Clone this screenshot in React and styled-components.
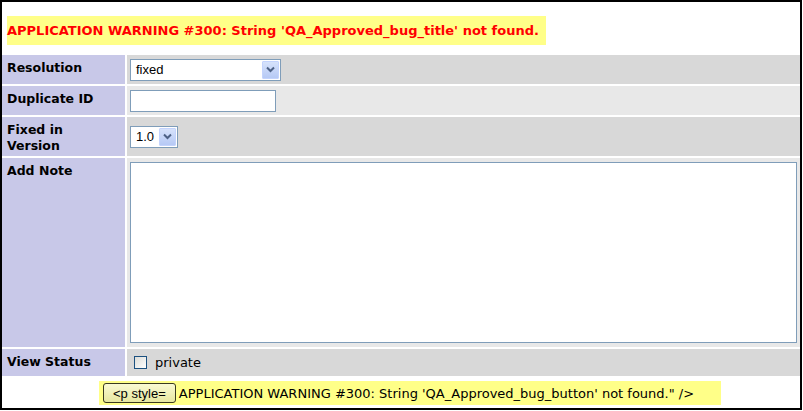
import React from "react";
import styled, { createGlobalStyle } from "styled-components";

const GlobalStyle = createGlobalStyle`
  html, body { margin: 0; padding: 0; background: #fff; }
  body { font-family: "DejaVu Sans", Verdana, sans-serif; }
`;

const Frame = styled.div`
  box-sizing: border-box;
  width: 802px;
  height: 410px;
  border: 2px solid #000;
  background: #fff;
  display: flex;
  flex-direction: column;
`;

const Header = styled.div`
  height: 53px;
  box-sizing: border-box;
  padding: 14px 0 0 5px;
`;

const Warning = styled.span`
  display: inline-block;
  background: #ffff88;
  color: #f00;
  font-weight: bold;
  font-size: 13px;
  line-height: 17px;
  padding: 6px 7px 6px 0;
`;

const Form = styled.div`
  display: grid;
  grid-template-columns: 123px 1fr;
  grid-template-rows: 29px 29px 39px 189px 27px;
  column-gap: 2px;
  row-gap: 2px;
  padding-bottom: 2px;
`;

const Label = styled.div`
  background: #c8c8e8;
  color: #000;
  font-weight: bold;
  font-size: 12.5px;
  line-height: 16px;
  padding: 5px 12px 0 5px;
`;

const Value = styled.div`
  background: ${(p) => (p.$alt ? "#e8e8e8" : "#d8d8d8")};
  display: flex;
  align-items: center;
  padding: 0 3px;
`;

const SelectBox = styled.div`
  box-sizing: border-box;
  width: ${(p) => p.$width}px;
  height: 22px;
  border: 1px solid #7f9db9;
  background: #fff;
  display: flex;
  align-items: center;
  justify-content: space-between;
  padding: 1px;
`;

const SelectText = styled.span`
  font-family: "Liberation Sans", Arial, sans-serif;
  font-size: 13px;
  color: #000;
  padding-left: 4px;
`;

const ArrowButton = styled.span`
  box-sizing: border-box;
  width: 17px;
  height: 18px;
  background: linear-gradient(#d6e2fb, #b6c9f5);
  border: 1px solid #c3d3fd;
  border-radius: 1px;
  display: flex;
  align-items: center;
  justify-content: center;
`;

const TextInput = styled.div`
  box-sizing: border-box;
  width: 146px;
  height: 22px;
  border: 1px solid #7f9db9;
  background: #fff;
`;

const NoteArea = styled.div`
  box-sizing: border-box;
  width: 667px;
  height: 181px;
  border: 1px solid #7f9db9;
  background: #fff;
`;

const CheckRow = styled.label`
  display: flex;
  align-items: center;
  gap: 8px;
  padding-left: 4px;
  font-size: 13px;
  color: #000;
`;

const CheckBox = styled.span`
  box-sizing: border-box;
  width: 13px;
  height: 13px;
  border: 1px solid #1c5180;
  background: linear-gradient(135deg, #dcdcd7, #fff);
`;

const Footer = styled.div`
  flex: 1;
  display: flex;
  justify-content: center;
  align-items: flex-start;
  padding: 3px 0 0 18px;
`;

const FooterNote = styled.div`
  display: flex;
  align-items: center;
  gap: 3px;
  background: #ffff88;
  padding: 2px 27px 2px 4px;
  font-size: 13px;
  color: #000;
`;

const SubmitButton = styled.span`
  box-sizing: border-box;
  height: 20px;
  width: 73px;
  display: flex;
  align-items: center;
  justify-content: center;
  border: 1px solid #3a3a20;
  border-radius: 3px;
  background: linear-gradient(#fafad2, #e6e6a0);
  font-family: "Liberation Sans", Arial, sans-serif;
  font-size: 13px;
  color: #000;
`;

const Chevron = () => (
  <svg width="9" height="7" viewBox="0 0 9 7">
    <path d="M1 1.5 L4.5 5 L8 1.5" fill="none" stroke="#4d6185" strokeWidth="2" />
  </svg>
);

const Select = ({ width, value }) => (
  <SelectBox $width={width}>
    <SelectText>{value}</SelectText>
    <ArrowButton>
      <Chevron />
    </ArrowButton>
  </SelectBox>
);

export default function App() {
  return (
    <>
      <GlobalStyle />
      <Frame>
        <Header>
          <Warning>APPLICATION WARNING #300: String 'QA_Approved_bug_title' not found.</Warning>
        </Header>
        <Form>
          <Label>Resolution</Label>
          <Value>
            <Select width={151} value="fixed" />
          </Value>

          <Label>Duplicate ID</Label>
          <Value $alt>
            <TextInput />
          </Value>

          <Label>Fixed in Version</Label>
          <Value>
            <Select width={48} value="1.0" />
          </Value>

          <Label>Add Note</Label>
          <Value $alt>
            <NoteArea />
          </Value>

          <Label>View Status</Label>
          <Value>
            <CheckRow>
              <CheckBox />
              private
            </CheckRow>
          </Value>
        </Form>
        <Footer>
          <FooterNote>
            <SubmitButton>&lt;p style=</SubmitButton>
            APPLICATION WARNING #300: String 'QA_Approved_bug_button' not found." /&gt;
          </FooterNote>
        </Footer>
      </Frame>
    </>
  );
}
